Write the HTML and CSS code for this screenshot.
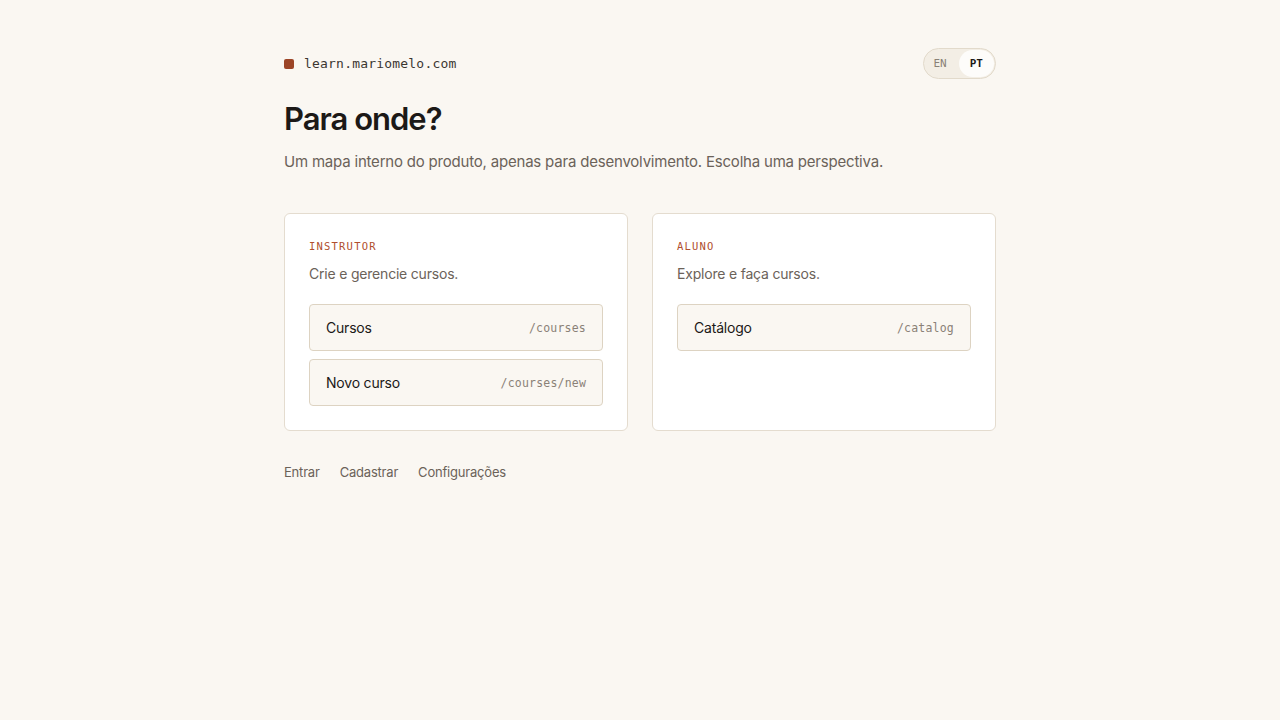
FILE: index.html
```html
<!DOCTYPE html>
<html lang="pt">
<head>
    <meta charset="UTF-8">
    <meta name="viewport" content="width=device-width, initial-scale=1.0">
    <title>Para onde? - learn.mariomelo.com</title>
    <link rel="stylesheet" href="styles.css">
</head>
<body>
    <div class="container">
        <header class="top">
            <div class="brand">
                <span class="dot"></span>
                <span class="domain">learn.mariomelo.com</span>
            </div>
            <div class="lang">
                <span class="lang-opt">EN</span>
                <span class="lang-opt active">PT</span>
            </div>
        </header>

        <h1>Para onde?</h1>
        <p class="lead">Um mapa interno do produto, apenas para desenvolvimento. Escolha uma perspectiva.</p>

        <div class="cards">
            <section class="card">
                <div class="label">Instrutor</div>
                <p class="desc">Crie e gerencie cursos.</p>
                <a class="route" href="#">
                    <span class="route-name">Cursos</span>
                    <span class="route-path">/courses</span>
                </a>
                <a class="route" href="#">
                    <span class="route-name">Novo curso</span>
                    <span class="route-path">/courses/new</span>
                </a>
            </section>
            <section class="card">
                <div class="label">Aluno</div>
                <p class="desc">Explore e faça cursos.</p>
                <a class="route" href="#">
                    <span class="route-name">Catálogo</span>
                    <span class="route-path">/catalog</span>
                </a>
            </section>
        </div>

        <nav class="footer-links">
            <a href="#">Entrar</a>
            <a href="#">Cadastrar</a>
            <a href="#">Configurações</a>
        </nav>
    </div>
</body>
</html>
```

FILE: styles.css
```css
body {
    margin: 0;
    padding: 0;
    background: #faf7f2;
    color: #1c1917;
    font-family: 'Inter', 'Noto Sans', sans-serif;
}

.container {
    width: 712px;
    margin: 0 auto;
    padding-top: 48px;
}

.top {
    display: flex;
    justify-content: space-between;
    align-items: center;
    height: 31px;
}

.brand {
    display: flex;
    align-items: center;
    gap: 10px;
}

.dot {
    width: 10px;
    height: 10px;
    border-radius: 2px;
    background: #9c4527;
}

.domain {
    font-family: 'DejaVu Sans Mono', monospace;
    font-size: 13px;
    letter-spacing: 0.2px;
    color: #3b3631;
}

.lang {
    display: flex;
    align-items: center;
    gap: 2px;
    height: 29px;
    padding: 0 1px 0 0;
    border: 1px solid #e2dacb;
    border-radius: 16px;
    background: #f3eee5;
}

.lang-opt {
    font-family: 'DejaVu Sans Mono', monospace;
    font-size: 11px;
    color: #8a8177;
    padding: 0 10px;
    height: 27px;
    line-height: 27px;
    border-radius: 14px;
}

.lang-opt.active {
    background: #fdfcfa;
    color: #1c1917;
    font-weight: bold;
    padding: 0 11px;
}

h1 {
    margin: 20px 0 0;
    font-size: 31px;
    font-weight: 600;
    letter-spacing: -1px;
    line-height: 40px;
}

.lead {
    margin: 12px 0 0;
    font-size: 15px;
    line-height: 22px;
    color: #6b6259;
    letter-spacing: -0.2px;
}

.cards {
    display: grid;
    grid-template-columns: 1fr 1fr;
    gap: 24px;
    margin-top: 40px;
}

.card {
    background: #ffffff;
    border: 1px solid #e4dccf;
    border-radius: 6px;
    padding: 24px;
    min-height: 168px;
}

.label {
    font-family: 'DejaVu Sans Mono', monospace;
    font-size: 10.5px;
    letter-spacing: 1.2px;
    text-transform: uppercase;
    color: #b04f2e;
    line-height: 16px;
}

.desc {
    margin: 11px 0 21px;
    font-size: 14px;
    line-height: 18px;
    color: #6b6259;
    letter-spacing: -0.2px;
}

.route {
    display: flex;
    justify-content: space-between;
    align-items: center;
    height: 45px;
    padding: 0 16px;
    margin-bottom: 8px;
    background: #faf7f2;
    border: 1px solid #ddd3c2;
    border-radius: 4px;
    text-decoration: none;
}

.route:last-child {
    margin-bottom: 0;
}

.route-name {
    font-size: 14px;
    color: #1c1917;
    letter-spacing: -0.2px;
}

.route-path {
    font-family: 'DejaVu Sans Mono', monospace;
    font-size: 11.5px;
    letter-spacing: 0.2px;
    color: #8a8177;
}

.footer-links {
    display: flex;
    gap: 20px;
    margin-top: 33px;
}

.footer-links a {
    font-size: 13px;
    color: #6b6259;
    text-decoration: none;
    letter-spacing: -0.2px;
}
```
